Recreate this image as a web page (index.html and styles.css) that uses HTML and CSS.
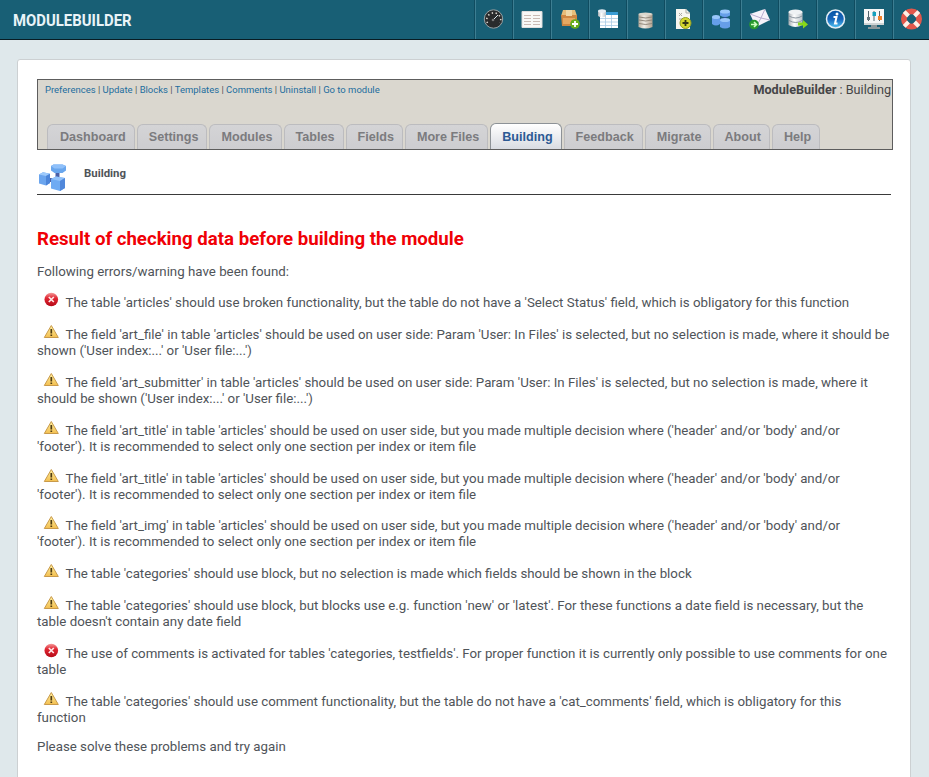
FILE: index.html
```
<!DOCTYPE html>
<html lang="en">
<head>
<meta charset="utf-8">
<title>ModuleBuilder</title>
<link rel="stylesheet" href="styles.css">
</head>
<body>
<svg class="defs" width="0" height="0" aria-hidden="true">
  <defs>
    <linearGradient id="red" x2="0" y2="1"><stop stop-color="#f59a9a"/><stop offset=".4" stop-color="#e02531"/><stop offset="1" stop-color="#b50a18"/></linearGradient>
    <linearGradient id="yellow" x2="0" y2="1"><stop stop-color="#fff0a0"/><stop offset="1" stop-color="#f3bf50"/></linearGradient>
    <linearGradient id="metal" x2="1" y2="0"><stop stop-color="#a5acb2"/><stop offset=".4" stop-color="#fff"/><stop offset="1" stop-color="#b9c2c8"/></linearGradient>
    <linearGradient id="sand" x2="1" y2="0"><stop stop-color="#b7ac9c"/><stop offset=".4" stop-color="#f1ede6"/><stop offset="1" stop-color="#b2a18f"/></linearGradient>
    <linearGradient id="blue" x2="0" y2="1"><stop stop-color="#0754a5"/><stop offset=".5" stop-color="#1765b9"/><stop offset="1" stop-color="#50c5f5"/></linearGradient>
  </defs>
  <symbol id="error" viewBox="0 0 16 16"><circle cx="8.300" cy="7.500" r="6.800" fill="url(#red)"/><path d="M5.800 5l5 5m0-5l-5 5" stroke="#ffe9e9" stroke-width="1.700"/></symbol>
  <symbol id="warning" viewBox="0 0 16 16"><path d="M8.300 1.500L15.300 13.500H1.300z" fill="url(#yellow)" stroke="#c99a4a" stroke-linejoin="round"/><path d="M8.300 5v4.500m0 1.100v1.500" stroke="#4e3c14" stroke-width="1.700"/></symbol>
  <symbol id="cubes" viewBox="0 0 30 30">
    <path d="M19.500 8v8M10 17h5" stroke="#4a5fa5" stroke-width="4"/>
    <path d="M13 3l2.500-1.500h9L28 3v4.500L24.500 10h-8L13 7.500z" fill="#69a6ed"/><path d="M13 3l2.500-1.500h9L28 3l-3.500 2.500h-8z" fill="#8fc0fa"/>
    <path d="M1 11.500l4-2.300 7 1.500v9.300l-4 2.500-7-2z" fill="#6ba5ee"/><path d="M1 11.500l4-2.300 7 1.500-4 2.300z" fill="#9ecafb"/><path d="M8 13l4-2.300V20l-4 2.500z" fill="#4c85d9"/>
    <path d="M13 16l5-2.500 9 1.500v10l-5 3-9-2.500z" fill="#6fabf3"/><path d="M13 16l5-2.500 9 1.500-5 3z" fill="#92c2fa"/><path d="M22 18l5-3v10l-5 3z" fill="#5188db"/>
  </symbol>
</svg>

<header class="topbar">
  <h1 class="brand">MODULEBUILDER</h1>
  <nav class="tools">
    <a class="tool"><svg viewBox="0 0 22 22"><circle cx="10.500" cy="11" r="9.200" fill="#292b2c" stroke="#98a2a5"/><path d="M4.500 15a7 7 0 1 1 12.500 0" fill="none" stroke="#dcd6cf" stroke-width="1.600" stroke-dasharray="1.400 2.600"/><path d="M10 12l5-5" stroke="#d9e9ee"/><circle cx="10" cy="12" r="1.300" fill="#777"/></svg></a>
    <a class="tool"><svg viewBox="0 0 22 22"><path fill="#f8f8f7" stroke="#dedddd" d="M1 3.500h20v16H1z"/><path fill="none" stroke="#c9bab4" d="M3 7.500h7m2 0h7M3 10.500h7m2 0h7M3 13.500h7m2 0h7M3 16.500h7m2 0h7"/></svg></a>
    <a class="tool"><svg viewBox="0 0 22 22"><path d="M4 2h12l2 6H2z" fill="#e7bd7a"/><path d="M2 7h16v11H3z" fill="#ce8743"/><path d="M7 2h6v6H7z" fill="#eed8a8"/><path d="M4 10h12v6H4z" fill="#e6a862"/><circle cx="16" cy="16" r="4.800" fill="#65ad1b"/><path d="M16 13v6m-3-3h6" stroke="#fff" stroke-width="1.800"/></svg></a>
    <a class="tool"><svg viewBox="0 0 22 22"><path d="M3 4h18v16H3z" fill="#fff"/><path d="M3 4h18v3H3z" fill="#3a9dd5"/><path d="M3 10.500h18M3 14h18M3 17.500h18M8.500 7v13M14.500 7v13" stroke="#a8cae4" stroke-width=".8"/><path d="M1 3v5q4 2.500 8 0V3" fill="url(#metal)"/><ellipse cx="5" cy="3" rx="4" ry="1.800" fill="#e5ecf3"/></svg></a>
    <a class="tool"><svg viewBox="0 0 22 22"><path d="M3.500 6v13q7 3 14 0V6" fill="url(#sand)"/><ellipse cx="10.500" cy="6" rx="7" ry="1.500" fill="#ddd8cd"/><path d="M4 9q7 2 13 0M4 12q7 2 13 0M4 15.500q7 2 13 0" fill="none" stroke="#94897c"/></svg></a>
    <a class="tool"><svg viewBox="0 0 22 22"><path d="M3 1h10l4 4v16H3z" fill="#f7f6ef"/><path d="M13 1v4h4M6 5l3 3m-3 0l3-3M6 11h5" fill="none" stroke="#aaa9a2"/><circle cx="12.500" cy="15" r="5.500" fill="#d4d72d" stroke="#929e27"/><path d="M12.500 12v6m-3-3h6" stroke="#343819" stroke-width="1.800"/></svg></a>
    <a class="tool"><svg viewBox="0 0 22 22"><path d="M14 5v8M8 12h6" stroke="#344f9b" stroke-width="3"/><g fill="#669ee8"><path d="M9 3.500v4q5 3 10 0v-4zM1 9v7q4 3 8 0V9zM9 12v7q5 3 10 0v-7z"/></g><g fill="#9ac7fa"><ellipse cx="14" cy="3.500" rx="5" ry="2"/><ellipse cx="5" cy="9" rx="4" ry="2"/><ellipse cx="14" cy="12" rx="5" ry="2"/></g></svg></a>
    <a class="tool"><svg viewBox="0 0 22 22"><path d="M1 6l15-5 5 11-14 7z" fill="#f6f2fa"/><path d="M1 6l11 4 4-9M7 19l5-9 9 2" fill="none" stroke="#b9add0"/><circle cx="5" cy="16.500" r="4.800" fill="#27992e"/><path d="M2 16.500h5m-2-2.500l2.500 2.500L5 19" fill="none" stroke="#d1ffc3" stroke-width="1.600"/></svg></a>
    <a class="tool"><svg viewBox="0 0 22 22"><path d="M1.500 4v13q7 4 14 0V4" fill="url(#metal)"/><ellipse cx="8.500" cy="4" rx="7" ry="2.500" fill="#eff2f4"/><path d="M2 8q7 4 13 0M2 12.500q7 4 13 0" fill="none" stroke="#8a959f"/><path d="M11 14.500h5v-2.500l5 4.500-5 4v-3h-5z" fill="#88d719"/></svg></a>
    <a class="tool"><svg viewBox="0 0 22 22"><circle cx="10.500" cy="11" r="9" fill="url(#blue)" stroke="#e5eef5" stroke-width="1.500"/><circle cx="12" cy="6" r="1.500" fill="#fff"/><path d="M8.500 9h3L10 15.500h2.500" fill="none" stroke="#fff" stroke-width="2"/></svg></a>
    <a class="tool"><svg viewBox="0 0 22 22"><path d="M1 1h20v15H1z" fill="#f7f7f7"/><path d="M1 15h20v2H1z" fill="#cfd4d5"/><path d="M8 17h6v2h3v2H5v-2h3z" fill="#8b979b"/><path d="M5.500 3v10m5.500-10v10m5.500-10v10" stroke="#53646c"/><path d="M4 9h3v3H4z" fill="#65747c"/><path d="M9.500 4h3.500v4H9.500z" fill="#139fbd"/><path d="M15 8h4v4h-4z" fill="#f3822b"/></svg></a>
    <a class="tool"><svg viewBox="0 0 22 22"><circle cx="10.500" cy="11" r="7.600" fill="none" stroke="#e2584c" stroke-width="5.800"/><g stroke="#fff0e7" stroke-width="4"><path d="M3.200 3.700l4.300 4.300m6 6l4.300 4.300m0-14.600L13.500 8M7.500 14l-4.300 4.300"/></g></svg></a>
  </nav>
</header>

<main class="panel">
  <section class="modhead">
    <div class="modtop">
      <nav class="links"><a>Preferences</a> | <a>Update</a> | <a>Blocks</a> | <a>Templates</a> | <a>Comments</a> | <a>Uninstall</a> | <a>Go to module</a></nav>
      <div class="crumb"><b>ModuleBuilder</b> : Building</div>
    </div>
    <nav class="tabs">
      <a class="tab">Dashboard</a><a class="tab">Settings</a><a class="tab">Modules</a><a class="tab">Tables</a><a class="tab">Fields</a><a class="tab">More Files</a><a class="tab active">Building</a><a class="tab">Feedback</a><a class="tab">Migrate</a><a class="tab">About</a><a class="tab">Help</a>
    </nav>
  </section>
  <div class="pagehead"><svg class="pageicon"><use href="#cubes"/></svg><strong>Building</strong></div>
  <h2>Result of checking data before building the module</h2>
  <p class="intro">Following errors/warning have been found:</p>
  <div class="messages">
    <p><svg class="icon"><use href="#error"/></svg>The table 'articles' should use broken functionality, but the table do not have a 'Select Status' field, which is obligatory for this function</p>
    <p><svg class="icon"><use href="#warning"/></svg>The field 'art_file' in table 'articles' should be used on user side: Param 'User: In Files' is selected, but no selection is made, where it should be<br>shown ('User index:...' or 'User file:...')</p>
    <p><svg class="icon"><use href="#warning"/></svg>The field 'art_submitter' in table 'articles' should be used on user side: Param 'User: In Files' is selected, but no selection is made, where it<br>should be shown ('User index:...' or 'User file:...')</p>
    <p><svg class="icon"><use href="#warning"/></svg>The field 'art_title' in table 'articles' should be used on user side, but you made multiple decision where ('header' and/or 'body' and/or<br>'footer'). It is recommended to select only one section per index or item file</p>
    <p><svg class="icon"><use href="#warning"/></svg>The field 'art_title' in table 'articles' should be used on user side, but you made multiple decision where ('header' and/or 'body' and/or<br>'footer'). It is recommended to select only one section per index or item file</p>
    <p><svg class="icon"><use href="#warning"/></svg>The field 'art_img' in table 'articles' should be used on user side, but you made multiple decision where ('header' and/or 'body' and/or<br>'footer'). It is recommended to select only one section per index or item file</p>
    <p><svg class="icon"><use href="#warning"/></svg>The table 'categories' should use block, but no selection is made which fields should be shown in the block</p>
    <p><svg class="icon"><use href="#warning"/></svg>The table 'categories' should use block, but blocks use e.g. function 'new' or 'latest'. For these functions a date field is necessary, but the<br>table doesn't contain any date field</p>
    <p><svg class="icon"><use href="#error"/></svg>The use of comments is activated for tables 'categories, testfields'. For proper function it is currently only possible to use comments for one<br>table</p>
    <p><svg class="icon"><use href="#warning"/></svg>The table 'categories' should use comment functionality, but the table do not have a 'cat_comments' field, which is obligatory for this<br>function</p>
  </div>
  <p class="outro">Please solve these problems and try again</p>
</main>
</body>
</html>
```
FILE: styles.css
```
* { box-sizing: border-box; }
body {
  margin: 0;
  height: 777px;
  overflow: hidden;
  background: #dfe8eb;
  color: #4f5459;
  font: 13.300px/15.940px Roboto, sans-serif;
}
.defs { position: absolute; }
.topbar {
  display: flex;
  justify-content: space-between;
  height: 40px;
  overflow: hidden;
  background: #185f75;
  border-bottom: 1px solid #081c23;
}
.brand {
  margin: 0 0 0 12.500px;
  font-size: 17px;
  line-height: 40px;
  color: #e9f4f8;
  transform: scaleX(.876);
  transform-origin: left;
}
.tools { display: flex; width: 454px; flex: none; }
.tool {
  flex: 0 0 38px;
  padding: 8px 0 0 7px;
  border-left: 1px solid #3d7e92;
  box-shadow: -1px 0 #104c60;
}
.tool svg { display: block; width: 22px; height: 22px; }
.panel {
  width: 894px;
  height: 740px;
  margin: 19px 0 0 17px;
  padding: 19px 17px 0 19px;
  background: #fff;
  border: 1px solid #ccd0d2;
  border-radius: 3px;
}
.modhead {
  display: flex;
  flex-direction: column;
  justify-content: space-between;
  height: 71px;
  background: #dad7cf;
  border: 1px solid #5d5d5d;
}
.modtop {
  display: flex;
  justify-content: space-between;
  padding: 2px 1px 0 7px;
}
.links { font-size: 9.480px; color: #555; white-space: nowrap; }
.links a { color: #226d9e; }
.crumb { font-size: 12.650px; color: #454547; }
.tabs { display: flex; align-items: flex-end; gap: 2px; padding-left: 9px; }
.tab {
  height: 25px;
  padding: 0 8px 0 11px;
  border: solid #bcbcbf;
  border-width: 1px 1px 0;
  border-radius: 6px 6px 0 0;
  background: linear-gradient(#d4d4d6, #cdcdd0);
  color: #7b7b7e;
  font: bold 12.600px/24px "Liberation Sans", sans-serif;
  white-space: nowrap;
}
.tab:first-child { padding-left: 12px; }
.tab.active {
  height: 26px;
  line-height: 26px;
  border-color: #8d9297;
  background: linear-gradient(#fff, #d9dce2);
  color: #2c5a94;
}
.pagehead {
  display: flex;
  height: 45px;
  margin-right: 2px;
  border-bottom: 1px solid #3a3a3a;
  font-size: 11.400px;
}
.pageicon { width: 30px; height: 30px; margin: 13px 16px 0 1px; }
.pagehead strong { margin-top: 16px; }
h2 { margin: 34px 0 0; font-size: 18.650px; line-height: 20px; color: #f00006; }
.intro { margin: 15px 0 15.200px; }
.messages p { margin: 0 0 15.980px; white-space: nowrap; }
.icon { width: 16px; height: 16px; margin: -6px 6.500px 0 6px; vertical-align: -1px; }
.outro { margin: -3px 0 0; }
```
